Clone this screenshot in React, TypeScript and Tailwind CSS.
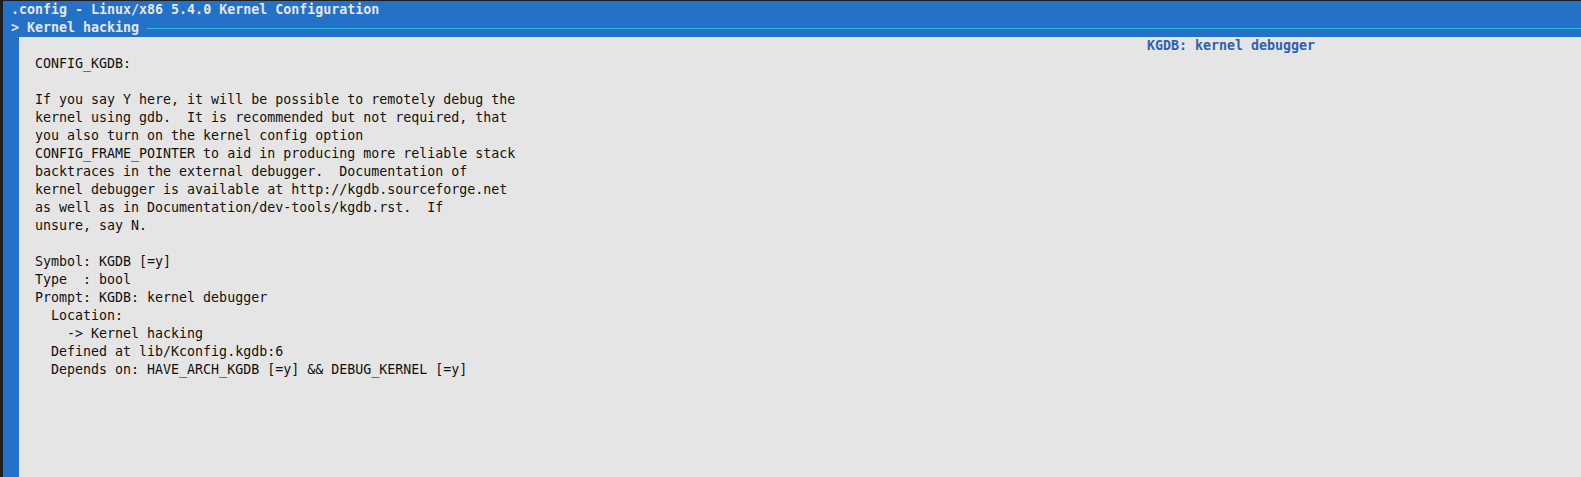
const HELP = `CONFIG_KGDB:

If you say Y here, it will be possible to remotely debug the
kernel using gdb.  It is recommended but not required, that
you also turn on the kernel config option
CONFIG_FRAME_POINTER to aid in producing more reliable stack
backtraces in the external debugger.  Documentation of
kernel debugger is available at http://kgdb.sourceforge.net
as well as in Documentation/dev-tools/kgdb.rst.  If
unsure, say N.

Symbol: KGDB [=y]
Type  : bool
Prompt: KGDB: kernel debugger
  Location:
    -> Kernel hacking
  Defined at lib/Kconfig.kgdb:6
  Depends on: HAVE_ARCH_KGDB [=y] && DEBUG_KERNEL [=y]`;

export default function App() {
  return (
    <div
      className="w-[1581px] h-[477px] overflow-hidden bg-[#1e1e1e] pt-px pl-[3px] flex flex-col text-[13.3px] leading-[18px]"
      style={{ fontFamily: '"DejaVu Sans Mono", "Liberation Mono", monospace' }}
    >
      <div className="bg-[#2472c8] flex flex-col flex-1">
        {/* title row */}
        <div className="h-[18px] pl-2 font-bold text-[#e5e5e5] whitespace-pre">
          .config - Linux/x86 5.4.0 Kernel Configuration
        </div>
        {/* breadcrumb row */}
        <div className="h-[18px] pl-2 flex items-center font-bold text-[#e5e5e5] whitespace-pre">
          <span>{"> Kernel hacking "}</span>
          <div className="flex-1 h-px bg-[#29b8db]" />
        </div>
        {/* help window */}
        <div className="flex flex-1">
          <div className="w-4 shrink-0" />
          <div className="flex-1 bg-[#e5e5e5] flex flex-col">
            <div className="h-[18px] pl-[1128px] font-bold text-[#2d62ae] whitespace-pre">
              KGDB: kernel debugger
            </div>
            <pre
              className="pl-4 text-[#111111] whitespace-pre text-[13.3px] leading-[18px]"
              style={{ fontFamily: '"DejaVu Sans Mono", "Liberation Mono", monospace' }}
            >
              {HELP}
            </pre>
          </div>
        </div>
      </div>
    </div>
  );
}
